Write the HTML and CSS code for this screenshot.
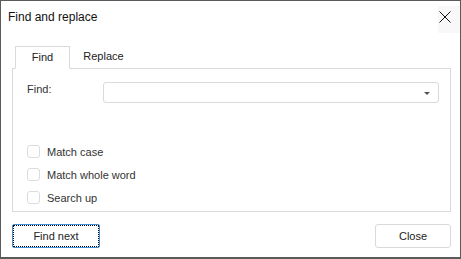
FILE: index.html
```html
<!DOCTYPE html>
<html lang="en">
  <head>
    <meta charset="UTF-8" />
    <title>Find and replace</title>
    <link rel="stylesheet" href="styles.css">
  </head>

  <body>
    <div class="dialog">
      <div class="titlebar">
        <span class="title">Find and replace</span>
        <span class="close-x">
          <svg width="12" height="12" viewBox="0 0 12 12">
            <path d="M0.5 0.5 L11.5 11.5 M11.5 0.5 L0.5 11.5" stroke="#111" stroke-width="1" fill="none" />
          </svg>
        </span>
      </div>

      <div class="content">
        <div class="tabs">
          <div class="tab active">Find</div>
          <div class="tab">Replace</div>
        </div>

        <div class="panel">
          <div class="field-row">
            <div class="field-label">Find:</div>
            <div class="combo"><span class="arrow"></span></div>
          </div>

          <div class="options">
            <div class="check"><span class="box"></span>Match case</div>
            <div class="check"><span class="box"></span>Match whole word</div>
            <div class="check"><span class="box"></span>Search up</div>
          </div>
        </div>

        <div class="buttons">
          <div class="btn primary">Find next</div>
          <div class="btn close">Close</div>
        </div>
      </div>
    </div>
  </body>
</html>
```

FILE: styles.css
```css
* {
  margin: 0;
  padding: 0;
  box-sizing: border-box;
}
body {
  font-family: "Liberation Sans", Arial, sans-serif;
  font-size: 11px;
  color: #222;
  background: #fff;
}
.dialog {
  width: 461px;
  height: 259px;
  border: 1px solid #5a5a5a;
  border-bottom-width: 2px;
  background: #fff;
  display: flex;
  flex-direction: column;
}
.titlebar {
  height: 31px;
  display: flex;
  align-items: center;
  justify-content: space-between;
  padding-left: 7px;
}
.title {
  font-size: 12px;
  color: #111;
}
.close-x {
  display: flex;
  width: 22px;
  height: 27px;
  margin-top: 5px;
  align-items: center;
  padding-left: 1px;
  padding-bottom: 5px;
  background: #f8f8f8;
}
.content {
  padding: 14px 9px 0 11px;
  display: flex;
  flex-direction: column;
}
.tabs {
  display: flex;
  padding-left: 3px;
}
.tab {
  height: 23px;
  line-height: 21px;
  text-align: center;
  margin-bottom: -1px;
}
.tab.active {
  width: 55px;
  border: 1px solid #d9d9d9;
  border-bottom-color: #fff;
  background: #fff;
  position: relative;
  z-index: 1;
}
.tab:not(.active) {
  width: 67px;
}
.panel {
  border: 1px solid #d9d9d9;
  height: 144px;
  padding: 13px 11px 0 14px;
}
.field-row {
  display: flex;
  align-items: flex-start;
}
.field-label {
  width: 76px;
  line-height: 14px;
  color: #333;
}
.combo {
  flex: 1;
  height: 21px;
  border: 1px solid #dadada;
  border-radius: 3px;
  display: flex;
  align-items: center;
  justify-content: flex-end;
  padding-right: 8px;
}
.arrow {
  width: 0;
  height: 0;
  border-left: 3px solid transparent;
  border-right: 3px solid transparent;
  border-top: 3px solid #555;
  margin-top: 1px;
}
.options {
  margin-top: 37px;
  display: flex;
  flex-direction: column;
}
.check {
  height: 23px;
  display: flex;
  align-items: center;
  color: #333;
}
.box {
  width: 13px;
  height: 13px;
  border: 1px solid #dcdcdc;
  border-radius: 3px;
  margin-right: 7px;
}
.buttons {
  margin-top: 12px;
  display: flex;
  justify-content: space-between;
}
.btn {
  height: 24px;
  line-height: 22px;
  text-align: center;
  border: 1px solid #d9d9d9;
  border-radius: 3px;
  color: #222;
}
.btn.primary {
  width: 88px;
  border-color: #3c8fd8;
  border-radius: 2px;
  outline: 1px dotted #000;
  outline-offset: -2px;
}
.btn.close {
  width: 76px;
}
```
